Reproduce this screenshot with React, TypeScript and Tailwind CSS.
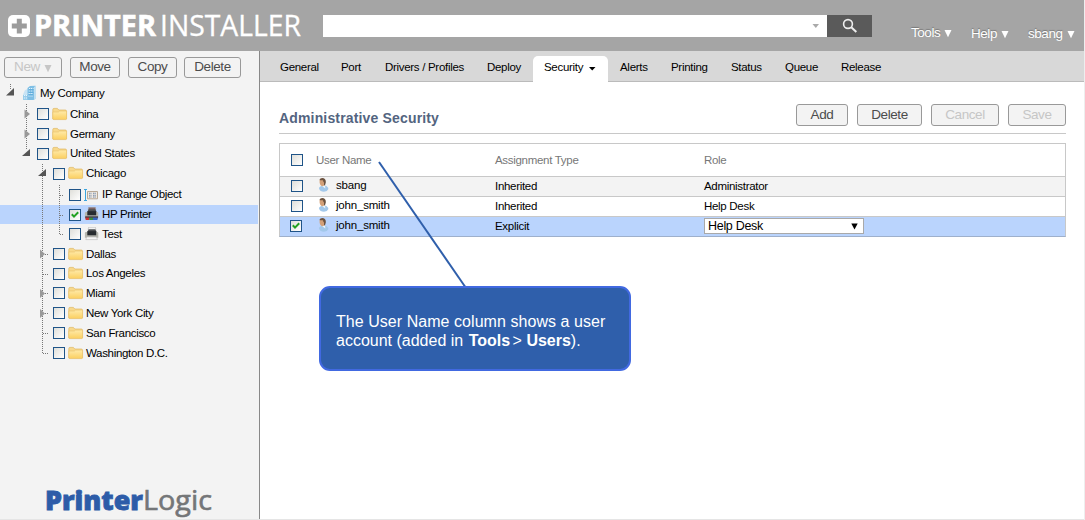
import type { ReactNode } from "react";

type Node = {
  label: string;
  level: 1 | 2 | 3;
  icon: "folder" | "range" | "printer" | "colorPrinter";
  height: string;
  checked?: boolean;
};

const nodes: Node[] = [
  { label: "China", level: 1, icon: "folder", height: "h-5" },
  { label: "Germany", level: 1, icon: "folder", height: "h-5" },
  { label: "United States", level: 1, icon: "folder", height: "h-[19px]" },
  { label: "Chicago", level: 2, icon: "folder", height: "h-[21px]" },
  { label: "IP Range Object", level: 3, icon: "range", height: "h-[21px]" },
  { label: "HP Printer", level: 3, icon: "colorPrinter", height: "h-[19px]", checked: true },
  { label: "Test", level: 3, icon: "printer", height: "h-5" },
  { label: "Dallas", level: 2, icon: "folder", height: "h-5" },
  { label: "Los Angeles", level: 2, icon: "folder", height: "h-[19px]" },
  { label: "Miami", level: 2, icon: "folder", height: "h-5" },
  { label: "New York City", level: 2, icon: "folder", height: "h-5" },
  { label: "San Francisco", level: 2, icon: "folder", height: "h-5" },
  { label: "Washington D.C.", level: 2, icon: "folder", height: "h-5" },
];

const indent = { 1: "pl-[37px]", 2: "pl-[53px]", 3: "pl-[69px]" };

function Check({ on }: { on?: boolean }) {
  return (
    <span className="block h-3 w-3 shrink-0 border border-[#1f5488] bg-linear-to-br from-[#dfdfda] to-white">
      {on && (
        <svg viewBox="0 0 10 10" className="block h-[10px] w-[10px]">
          <path d="M1.8 4.2 4 6.6 8.2 2.2" fill="none" stroke="#21a121" strokeWidth="2" />
        </svg>
      )}
    </span>
  );
}

function NodeIcon({ kind }: { kind: Node["icon"] }) {
  if (kind === "folder")
    return (
      <svg viewBox="0 0 16 14" className="-mt-px h-[14px] w-4 shrink-0">
        <defs>
          <linearGradient id="folderFill" x1="0" y1="0" x2="0" y2="1">
            <stop offset="0" stopColor="#ffeaa9" />
            <stop offset="1" stopColor="#fbcf60" />
          </linearGradient>
        </defs>
        <path d="M.8 12V2.6Q.8 1.4 2 1.4H5.4L6.8 3H13.3Q14.4 3 14.4 4V12Z" fill="#f8d98c" stroke="#e0b863" strokeWidth=".7" />
        <path d="M.8 5H6.3L7.6 4.1H14.6V11.5Q14.6 12.6 13.6 12.6H1.8Q.8 12.6 .8 11.5Z" fill="url(#folderFill)" stroke="#e8c06a" strokeWidth=".6" />
      </svg>
    );
  if (kind === "range")
    return (
      <svg viewBox="0 0 16 14" className="h-[14px] w-4 shrink-0">
        <path d="M0 1.5H3M1.5 1.5V12.5M0 12.5H3" stroke="#3aa5df" fill="none" />
        <path d="M3.5 3.5H13.5V10.8H3.5Z" fill="#efe9e2" stroke="#b9a996" />
        <path d="M5 5.3H7.5M9 5.3H12M5 7.2H7.5M9 7.2H12M5 9H7.5M9 9H12" stroke="#7187a5" strokeWidth="1.1" strokeDasharray="1.2 .4" />
      </svg>
    );
  return (
    <svg viewBox="0 0 16 14" className="-mt-px h-[14px] w-4 shrink-0">
      <path d="M4.5 .3H11.5L12 5H4Z" fill={kind === "printer" ? "#f2f2f2" : "#7f6464"} stroke="#aaa" strokeWidth=".5" />
      <path d="M3.4 5.2 4.6 2.3H11.4L12.6 5.2Z" fill="#4d5053" />
      <path d="M.9 6Q.9 5 2 5H13.2Q14.3 5 14.3 6V10.8H.9Z" fill="#b4b5ae" />
      <path d="M3.3 4.2H12.2V8.3H3.3Z" fill="#272b30" />
      {kind === "printer" ? (
        <path d="M2.6 10H12.6L13.4 12.6H1.8Z" fill="#f7f7f7" stroke="#aaa" strokeWidth=".5" />
      ) : (
        <>
          <path d="M1.2 9.3H14V11.5H1.2Z" fill="#463d46" />
          <path d="M1.6 10.6H5.2V13H1.6Z" fill="#cc3131" />
          <path d="M5.2 10.6H9V13H5.2Z" fill="#398943" />
          <path d="M9 10.6H13.5V13H9Z" fill="#3464c1" />
        </>
      )}
    </svg>
  );
}

function TreeLines() {
  return (
    <svg className="pointer-events-none absolute left-0 -top-[2px]" width="80" height="310">
      <g stroke="#777" strokeWidth="1" strokeDasharray="1 1" fill="none">
        <path d="M10.5 3V8M26.5 23V68M42.5 83V272M59.5 104V154" />
        <path d="M43 173.5H48M43 193.5H48M43 212.5H48M43 232.5H48M43 252.5H48M43 272.5H48M60 114.5H64M60 134.5H64M60 153.5H64" />
      </g>
      <g fill="#555">
        <path d="M14 7V14.5H6Z" />
        <path d="M30 68V75H22Z" />
        <path d="M46 88V95H38Z" />
      </g>
      <g fill="#999">
        <path d="M24.5 28.5 30 33 24.5 37.5Z" />
        <path d="M24.5 48.5 30 53 24.5 57.5Z" />
        <path d="M40 168.5 45 173 40 177.5Z" />
        <path d="M40 208 45 212.5 40 217Z" />
        <path d="M40 228 45 232.5 40 237Z" />
      </g>
    </svg>
  );
}

function Caret({ className }: { className: string }) {
  return (
    <svg width="8" height="9" viewBox="0 0 8 9" className={`inline-block ${className}`}>
      <path d="M.5 1H7.5L4 8.2Z" fill="currentColor" />
    </svg>
  );
}

function Button({ children, className, disabled }: { children: ReactNode; className: string; disabled?: boolean }) {
  return (
    <button
      disabled={disabled}
      className={`flex shrink-0 items-center justify-center rounded-[3px] border border-[#999] bg-[#f3f3f3] pb-px text-[13.5px] leading-none tracking-[-0.4px] ${
        disabled ? "text-[#c6c6c6]" : "text-[#4c4c4c]"
      } ${className}`}
    >
      {children}
    </button>
  );
}

function Header() {
  return (
    <header className="flex h-[51px] shrink-0 bg-[#a5a5a5]">
      <svg className="shrink-0" width="323" height="51">
        <rect x="8" y="15" width="22" height="22" rx="5" fill="#fff" />
        <path d="M16.8 18.8H21.8V23.6H26.8V28.6H21.8V33.4H16.8V28.6H11.8V23.6H16.8Z" fill="#9c9c9c" />
        <g fill="#fff" stroke="#fff" fontFamily="'Open Sans', sans-serif" fontSize="29">
          <text x="34" y="36" fontWeight="700" strokeWidth=".6" textLength="122" lengthAdjust="spacingAndGlyphs">PRINTER</text>
          <text x="160" y="36" fontWeight="400" strokeWidth=".3" textLength="141" lengthAdjust="spacingAndGlyphs">INSTALLER</text>
        </g>
      </svg>
      <div className="mt-[15px] flex h-[22px] w-[549px] shrink-0">
        <div className="flex flex-1 items-center justify-end bg-white pr-[7px]">
          <svg width="8" height="5"><path d="M.5 0H7L3.8 4Z" fill="#aaa" /></svg>
        </div>
        <div className="flex w-[45px] items-center justify-center bg-[#5a5a5a]">
          <svg width="16" height="16" fill="none" stroke="#eee">
            <circle cx="6" cy="6" r="4.4" strokeWidth="1.6" />
            <path d="M9.3 9.3 14.3 14" strokeWidth="2" />
          </svg>
        </div>
      </div>
      <nav className="ml-[39px] flex text-[13.5px] leading-[15px] tracking-[-0.45px] text-white [text-shadow:0_-1px_1px_#777]">
        <span className="mt-[25px] w-[60px] whitespace-nowrap">Tools<Caret className="ml-1" /></span>
        <span className="mt-[26px] w-[57px] whitespace-nowrap">Help<Caret className="ml-1" /></span>
        <span className="mt-[26px] whitespace-nowrap">sbang<Caret className="ml-1" /></span>
      </nav>
    </header>
  );
}

function Sidebar() {
  return (
    <aside className="flex w-[260px] shrink-0 flex-col border-r border-[#888] bg-[#f3f3f3]">
      <div className="flex pl-1 pt-[6px]">
        <Button className="h-[21px] w-[58px]" disabled>New<Caret className="ml-1 mt-[2px]" /></Button>
        <Button className="ml-2 h-[21px] w-[50px]">Move</Button>
        <Button className="ml-2 h-[21px] w-[49px]">Copy</Button>
        <Button className="ml-[7px] h-[21px] w-[57px]">Delete</Button>
      </div>
      <div className="relative mt-[5px] flex flex-col pt-[1px] text-[11.5px] leading-none tracking-[-0.32px] text-black">
        <div className="flex h-5 items-center pl-[22px]">
          <svg width="16" height="16" viewBox="0 0 16 16" className="-mt-[2px] mr-[2px]">
            <path d="M1 9.5 3 5 6 4V14L1 15Z" fill="#c9e4f5" />
            <path d="M1 10H6V15H1Z" fill="#9bcdea" />
            <path d="M5.5 3 8 1 13.5 .7V13.5L11.5 15H5.5Z" fill="#7fbfe5" />
            <path d="M12 2 14 .7V13.5L12 15Z" fill="#c0deef" />
            <path d="M7 3.5H11.5M6.8 6H11.3M6.6 8.5H11M6.4 11H11M2 10.5H5M2 13H5" stroke="#e4f6ff" strokeWidth="1.2" strokeDasharray="1.2 .8" />
            <path d="M7 4.8H11.5M6.8 7.3H11.3M6.6 9.8H11" stroke="#4c9fd5" strokeWidth=".7" />
          </svg>
          <span className="-mt-px">My Company</span>
        </div>
        {nodes.map((n) => (
          <div key={n.label} className={`flex items-center ${n.height} ${indent[n.level]} ${n.checked ? "mr-px bg-[#bad4fd]" : ""}`}>
            <Check on={n.checked} />
            <span className="ml-[3px] mr-[2px] flex"><NodeIcon kind={n.icon} /></span>
            <span className={`whitespace-nowrap ${n.height === "h-5" ? "pt-[2px]" : "pt-px"}`}>{n.label}</span>
          </div>
        ))}
        <TreeLines />
      </div>
      <svg className="mt-auto" width="258" height="40">
        <g fontFamily="'Open Sans', sans-serif" fontSize="27">
          <text x="45" y="31" fontWeight="800" fill="#2d5ca8" stroke="#2d5ca8" strokeWidth=".8" textLength="98" lengthAdjust="spacingAndGlyphs">Printer</text>
          <text x="143" y="31" fontWeight="400" fill="#747678" stroke="#747678" strokeWidth=".6" textLength="69" lengthAdjust="spacingAndGlyphs">Logic</text>
        </g>
      </svg>
    </aside>
  );
}

const tabs = [
  { label: "General", w: "w-[61px]" },
  { label: "Port", w: "w-[44px]" },
  { label: "Drivers / Profiles", w: "w-[102px]" },
  { label: "Deploy", w: "w-[46px]" },
  { label: "Security", w: "w-[75px]", active: true },
  { label: "Alerts", w: "w-[51px]" },
  { label: "Printing", w: "w-[60px]" },
  { label: "Status", w: "w-[54px]" },
  { label: "Queue", w: "w-[56px]" },
  { label: "Release", w: "w-[60px]" },
];

function Tabs() {
  return (
    <nav className="flex h-[31px] shrink-0 items-end border-b border-[#bbb] bg-[#d8d8d8] pl-5 text-[11.5px] leading-none tracking-[-0.3px]">
      {tabs.map((t) =>
        t.active ? (
          <div key={t.label} className="-mb-px mr-3 flex h-[26px] w-[75px] shrink-0 items-center rounded-t-[5px] bg-white pb-[2px] pl-[11px]">
            {t.label}
            <svg width="7" height="4" className="ml-[6px] mt-[2px]"><path d="M0 0H6.5L3.2 3.6Z" /></svg>
          </div>
        ) : (
          <div key={t.label} className={`flex h-[26px] shrink-0 items-center whitespace-nowrap pb-px ${t.w}`}>
            {t.label}
          </div>
        ),
      )}
    </nav>
  );
}

function User() {
  return (
    <svg width="14" height="16" viewBox="0 0 14 16" className="-mt-[3px] mr-[5px] shrink-0">
      <path d="M3 11.5Q3 9.5 6 9L9 8.5Q12.2 9.5 12.4 12Q11.5 14.5 8 14.8Q4 14.8 3 11.5Z" fill="#a3c8ea" />
      <path d="M6 9 9 8 9.3 11.5Z" fill="#eef7fc" />
      <path d="M3.6 3Q4.5 1.2 6.5 1.3Q9.3 1.8 9 5.5Q8.8 8.8 7 9.3Q4 9 3.6 5.5Z" fill="#d3a078" />
      <path d="M3.4 3Q4 1 6.7 .9Q10.2 1.4 9.8 5.5L9 8.3L8 8.6L8 5.4Q7.2 5 7 3.2Q5 3.5 3.4 3Z" fill="#6b5341" />
    </svg>
  );
}

const rows = [
  { name: "sbang", type: "Inherited", role: "Administrator", bg: "bg-[#f3f3f3]" },
  { name: "john_smith", type: "Inherited", role: "Help Desk", bg: "bg-white" },
  { name: "john_smith", type: "Explicit", role: "Help Desk", bg: "bg-[#bad4fd]", selected: true },
];

function Table() {
  return (
    <div className="ml-[19px] mt-[9px] w-[787px] border border-b-[#9eb0cc] border-[#c8c8c8] text-[11.5px] leading-none tracking-[-0.3px] text-black">
      <div className="grid h-8 grid-cols-[36px_179px_209px_1fr] items-center text-[#777]">
        <span className="pl-[11px]"><Check /></span>
        <span className="pt-[2px]">User Name</span>
        <span className="pt-[2px]">Assignment Type</span>
        <span className="pt-[2px]">Role</span>
      </div>
      {rows.map((r, i) => (
        <div key={i} className={`grid h-5 grid-cols-[36px_179px_209px_1fr] items-center border-t border-[#c8c8c8] ${r.bg}`}>
          <span className={r.selected ? "-mt-px pl-[10px]" : "-mt-px pl-[11px]"}><Check on={r.selected} /></span>
          <span className="flex items-center"><User /><span className="-mt-px ml-px tracking-[-0.2px]">{r.name}</span></span>
          <span>{r.type}</span>
          {r.selected ? (
            <span className="-mt-px flex h-4 w-[160px] items-center justify-between border border-[#a9a9a9] bg-white pl-[3px] pr-[5px] text-[12.5px]">
              {r.role}
              <svg width="7" height="7"><path d="M.3 .5H6.7L3.5 6.5Z" /></svg>
            </span>
          ) : (
            <span>{r.role}</span>
          )}
        </div>
      ))}
    </div>
  );
}

function Callout() {
  return (
    <>
      <svg className="pointer-events-none absolute left-[370px] top-[155px]" width="105" height="135">
        <path d="M9 7 96 133" stroke="#2f5fab" strokeWidth="2" />
      </svg>
      <div className="absolute left-[319px] top-[286px] h-[85px] w-[312px] rounded-[11px] border-2 border-[#4169e1] bg-[#2f5fab] pl-[15px] pt-[24px] text-[16px] leading-[19px] text-white">
        <div className="whitespace-nowrap tracking-[0.05px]">The User Name column shows a user</div>
        <div className="whitespace-nowrap">account (added in&nbsp;<b className="ml-px">Tools</b><span className="-ml-[2px]"> &gt; </span><b>Users</b>).</div>
      </div>
    </>
  );
}

export default function App() {
  return (
    <div className="relative flex h-[520px] w-[1085px] flex-col overflow-hidden border-r border-[#eee] bg-white font-['Liberation_Sans',Arial,sans-serif]">
      <Header />
      <div className="flex h-[468px]">
        <Sidebar />
        <main className="flex w-[824px] flex-col">
          <Tabs />
          <div className="ml-[19px] mt-[15px] flex h-[37px] w-[787px] border-b border-[#c8c8c8]">
            <h1 className="mt-[14px] flex-1 text-[14px] font-bold leading-[15px] tracking-[0.16px] text-[#536480]">Administrative Security</h1>
            <div className="mt-[7px] flex">
              <Button className="h-[22px] w-[52px]">Add</Button>
              <Button className="ml-[9px] h-[22px] w-[65px]">Delete</Button>
              <Button className="ml-[9px] h-[22px] w-[68px]" disabled>Cancel</Button>
              <Button className="ml-[9px] h-[22px] w-[58px]" disabled>Save</Button>
            </div>
          </div>
          <Table />
        </main>
      </div>
      <div className="h-px bg-[#e5e5e5]" />
      <Callout />
    </div>
  );
}
